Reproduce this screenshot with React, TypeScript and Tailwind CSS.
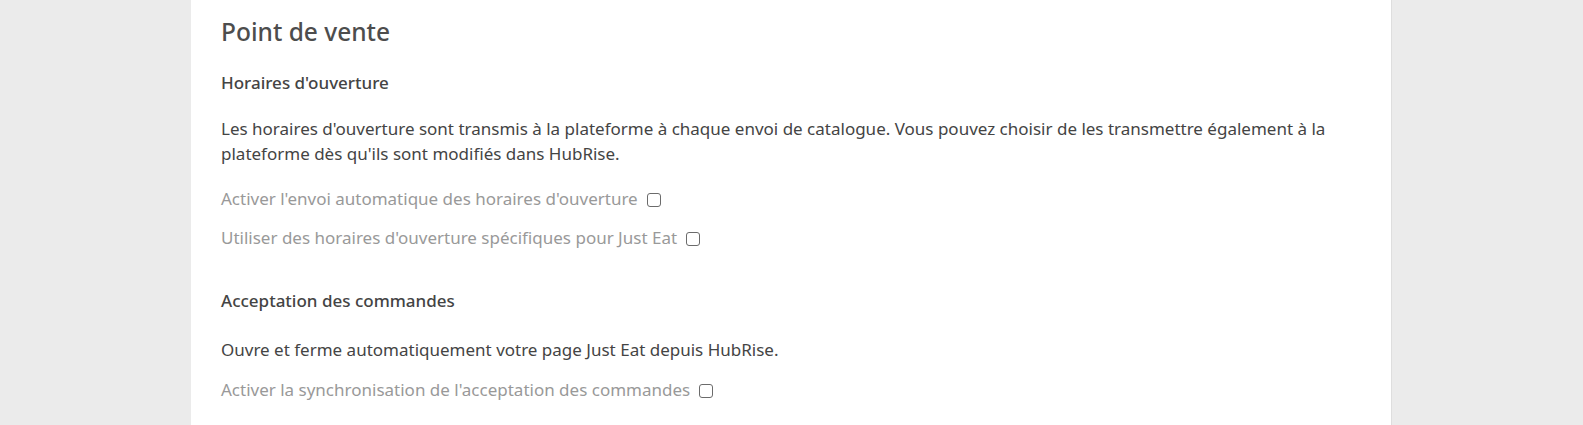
import React from "react";

const font = { fontFamily: '"Noto Sans", "Open Sans", sans-serif' };

function Check() {
  return (
    <span className="inline-block w-[14px] h-[14px] border border-[#6b6b6b] rounded-[3px] bg-white ml-[9px] align-[-2px]" />
  );
}

export default function App() {
  return (
    <div className="min-h-[425px] w-full bg-[#ebebeb] flex justify-center" style={font}>
      <div className="w-[1201px] bg-white border-r border-[#dedede] px-[30px] pt-[16px] pb-[20px] text-[#444]">
        <h2 className="text-[24.5px] leading-[32px] font-medium text-[#4d4d4d]">Point de vente</h2>
        <h3 className="mt-[22px] text-[17px] leading-[26px] font-medium">Horaires d'ouverture</h3>
        <p className="mt-[20px] text-[17px] leading-[25px]">
          Les horaires d'ouverture sont transmis à la plateforme à chaque envoi de catalogue. Vous pouvez choisir de les transmettre également à la plateforme dès qu'ils sont modifiés dans HubRise.
        </p>
        <div className="mt-[20px] text-[17px] leading-[26px] text-[#999]">
          Activer l'envoi automatique des horaires d'ouverture
          <Check />
        </div>
        <div className="mt-[13px] text-[17px] leading-[26px] text-[#999]">
          Utiliser des horaires d'ouverture spécifiques pour Just Eat
          <Check />
        </div>
        <h3 className="mt-[37px] text-[17px] leading-[26px] font-medium">Acceptation des commandes</h3>
        <p className="mt-[23px] text-[17px] leading-[25px]">
          Ouvre et ferme automatiquement votre page Just Eat depuis HubRise.
        </p>
        <div className="mt-[15px] text-[17px] leading-[26px] text-[#999]">
          Activer la synchronisation de l'acceptation des commandes
          <Check />
        </div>
      </div>
    </div>
  );
}
